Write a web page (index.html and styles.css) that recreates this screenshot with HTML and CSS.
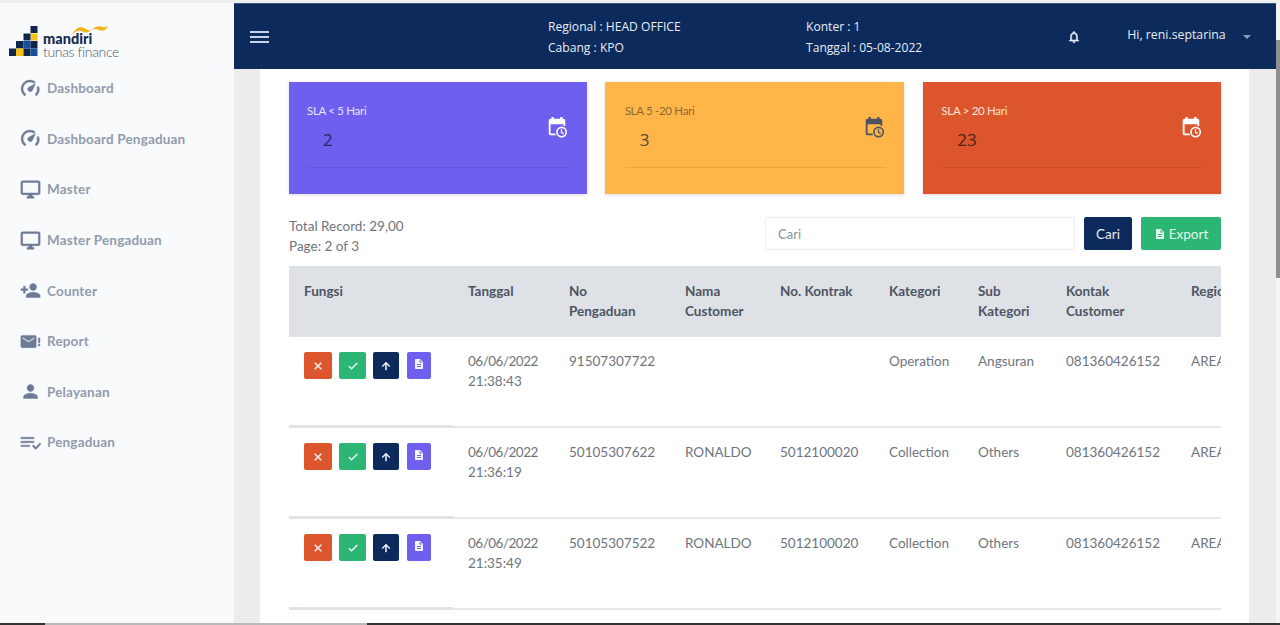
FILE: index.html
```html
<!DOCTYPE html>
<html lang="id">
<head>
    <meta charset="UTF-8">
    <meta name="viewport" content="width=device-width, initial-scale=1.0">
    <title>Mandiri Tunas Finance</title>
    <link rel="stylesheet" href="styles.css">
</head>
<body>

<svg class="icon-defs" aria-hidden="true">
    <symbol id="i-speed" viewBox="0 0 24 24">
        <path d="M5.2 20.500A10 10 0 0 1 17.500 4.400l-1.900 1.500A7.600 7.600 0 0 0 6.900 18.800zM18.800 20.500A10 10 0 0 0 21.200 9.300l-1.900 1.500a7.600 7.600 0 0 1-2 8z"/>
        <path d="M17.800 6.200l-3.700 8a2.800 2.800 0 1 1-4.400-3.400z"/>
    </symbol>
    <symbol id="i-desktop" viewBox="0 0 24 24">
        <path d="M21 2H3c-1.100 0-2 .9-2 2v12c0 1.100.9 2 2 2h7v2H8v2h8v-2h-2v-2h7c1.100 0 2-.9 2-2V4c0-1.100-.9-2-2-2zm0 14H3V4h18v12z"/>
    </symbol>
    <symbol id="i-person-add" viewBox="0 0 24 24">
        <path d="M15 12c2.210 0 4-1.790 4-4s-1.790-4-4-4-4 1.790-4 4 1.790 4 4 4zm-9-2V7H4v3H1v2h3v3h2v-3h3v-2H6zm9 4c-2.670 0-8 1.340-8 4v2h16v-2c0-2.660-5.330-4-8-4z"/>
    </symbol>
    <symbol id="i-mail" viewBox="0 0 24 24">
        <path d="M17 5H2.500C1.700 5 1 5.700 1 6.500v11c0 .8.7 1.500 1.500 1.500H17c.8 0 1.500-.7 1.500-1.500v-11C18.500 5.700 17.800 5 17 5zm-.3 3.500L9.800 13 2.800 8.500V6.800l7 4.500 6.900-4.500z"/>
        <path d="M21 8h1.800v5.500H21zM21 15h1.800v2H21z"/>
    </symbol>
    <symbol id="i-person" viewBox="0 0 24 24">
        <path d="M12 12c2.210 0 4-1.790 4-4s-1.790-4-4-4-4 1.790-4 4 1.790 4 4 4zm0 2c-2.670 0-8 1.340-8 4v2h16v-2c0-2.660-5.330-4-8-4z"/>
    </symbol>
    <symbol id="i-list-check" viewBox="0 0 24 24">
        <path d="M1 6h15v1.700H1zM1 10.500h15v1.700H1zM1 15h10v1.700H1z"/>
        <path d="M14 16l1.300-1.300 2.700 2.700 4.700-4.900 1.300 1.300-6 6.300z"/>
    </symbol>
    <symbol id="i-calendar" viewBox="0 0 24 24">
        <path d="M6 1h2.500v2h7V1H18v2h1c1.100 0 2 .9 2 2v6.300a7.500 7.500 0 0 0-2-.7V9H5v10h5.100c.2.700.5 1.400.9 2H5c-1.100 0-2-.9-2-2V5c0-1.100.9-2 2-2h1z"/>
        <path fill-rule="evenodd" d="M17 11.500a6 6 0 1 1 0 12 6 6 0 0 1 0-12zm0 1.800a4.200 4.200 0 1 0 0 8.400 4.200 4.200 0 0 0 0-8.400zm-.8 1.200h1.400v2.900l2.100 1.200-.7 1.200-2.800-1.600z"/>
    </symbol>
    <symbol id="i-close" viewBox="0 0 24 24">
        <path d="M19 6.400L17.600 5 12 10.600 6.400 5 5 6.400 10.600 12 5 17.600 6.400 19 12 13.400 17.600 19 19 17.600 13.400 12z"/>
    </symbol>
    <symbol id="i-check" viewBox="0 0 24 24">
        <path d="M9 16.200L4.800 12l-1.400 1.400L9 19 21 7l-1.400-1.400z"/>
    </symbol>
    <symbol id="i-up" viewBox="0 0 24 24">
        <path d="M4 12l1.400 1.400L11 7.800V20h2V7.800l5.600 5.600L20 12l-8-8z"/>
    </symbol>
    <symbol id="i-file" viewBox="0 0 24 24">
        <path d="M14 2H6c-1.100 0-2 .9-2 2v16c0 1.100.9 2 2 2h12c1.100 0 2-.9 2-2V8zm2 16H8v-2h8zm0-4H8v-2h8zm-3-5V3.500L18.500 9z"/>
    </symbol>
</svg>

<div class="app">
    <div class="top-strip"></div>

    <div class="layout">
        <aside class="sidebar">
            <div class="logo">
                <svg class="logo-blocks" viewBox="0 0 29 30" aria-hidden="true">
                    <rect x="21.500" y="0" width="7" height="7" fill="#10264d"/>
                    <rect x="21.500" y="7.500" width="7" height="7" fill="#f5c21b"/>
                    <rect x="14.500" y="7.500" width="7" height="7" fill="#10264d"/>
                    <rect x="7" y="15" width="7.500" height="7.500" fill="#10264d"/>
                    <rect x="14.500" y="15" width="7" height="7.500" fill="#16509c"/>
                    <rect x="21.500" y="15" width="7" height="7.500" fill="#10264d"/>
                    <rect x="0" y="22.500" width="7" height="7.500" fill="#10264d"/>
                    <rect x="7" y="22.500" width="7.500" height="7.500" fill="#f5c21b"/>
                    <rect x="14.500" y="22.500" width="7" height="7.500" fill="#10264d"/>
                    <rect x="21.500" y="22.500" width="7" height="7.500" fill="#16509c"/>
                </svg>
                <div class="logo-text">
                    <svg class="logo-wave" viewBox="0 0 36 10" aria-hidden="true">
                        <path d="M0 9C5 2 9 0 14 4c3 2 5 2 8-1 3-2 6-2 9-1 2 .5 3 0 5-1-2 4-5 6-9 4-4-2-6-1-9 1-4 3-6 1-9 0-3-1-5 0-9 3z" fill="#f5b31b"/>
                    </svg>
                    <span class="logo-name">mandiri</span>
                    <span class="logo-sub">tunas finance</span>
                </div>
            </div>

            <nav class="nav">
                <a class="nav-item"><svg class="nav-icon"><use href="#i-speed"/></svg>Dashboard</a>
                <a class="nav-item"><svg class="nav-icon"><use href="#i-speed"/></svg>Dashboard Pengaduan</a>
                <a class="nav-item"><svg class="nav-icon"><use href="#i-desktop"/></svg>Master</a>
                <a class="nav-item"><svg class="nav-icon"><use href="#i-desktop"/></svg>Master Pengaduan</a>
                <a class="nav-item"><svg class="nav-icon"><use href="#i-person-add"/></svg>Counter</a>
                <a class="nav-item"><svg class="nav-icon"><use href="#i-mail"/></svg>Report</a>
                <a class="nav-item"><svg class="nav-icon"><use href="#i-person"/></svg>Pelayanan</a>
                <a class="nav-item"><svg class="nav-icon"><use href="#i-list-check"/></svg>Pengaduan</a>
            </nav>
        </aside>

        <div class="main">
            <header class="topbar">
                <svg class="menu-btn" viewBox="0 0 19 12" aria-hidden="true">
                    <path d="M0 0h19v2H0zM0 5h19v2H0zM0 10h19v2H0z"/>
                </svg>
                <div class="info info-regional">
                    <div>Regional : HEAD OFFICE</div>
                    <div>Cabang : KPO</div>
                </div>
                <div class="info info-konter">
                    <div>Konter : 1</div>
                    <div>Tanggal : 05-08-2022</div>
                </div>
                <svg class="bell" viewBox="0 0 24 24" aria-hidden="true">
                    <path d="M12 22c1.100 0 2-.9 2-2h-4c0 1.100.9 2 2 2zm6-6v-5c0-3.070-1.630-5.640-4.500-6.320V4c0-.83-.67-1.500-1.500-1.500s-1.500.67-1.500 1.500v.68C7.640 5.360 6 7.920 6 11v5l-2 2v1h16v-1l-2-2zm-2 1H8v-6c0-2.480 1.510-4.500 4-4.500s4 2.020 4 4.500v6z"/>
                </svg>
                <div class="user">Hi, reni.septarina</div>
                <span class="caret"></span>
            </header>

            <div class="content">
                <main class="panel">
                    <section class="cards">
                        <div class="card card-purple">
                            <div class="card-body">
                                <div>
                                    <div class="card-title">SLA &lt; 5 Hari</div>
                                    <div class="card-value">2</div>
                                </div>
                                <svg class="card-icon"><use href="#i-calendar"/></svg>
                            </div>
                        </div>
                        <div class="card card-orange">
                            <div class="card-body">
                                <div>
                                    <div class="card-title">SLA 5 -20 Hari</div>
                                    <div class="card-value">3</div>
                                </div>
                                <svg class="card-icon"><use href="#i-calendar"/></svg>
                            </div>
                        </div>
                        <div class="card card-red">
                            <div class="card-body">
                                <div>
                                    <div class="card-title">SLA &gt; 20 Hari</div>
                                    <div class="card-value">23</div>
                                </div>
                                <svg class="card-icon"><use href="#i-calendar"/></svg>
                            </div>
                        </div>
                    </section>

                    <section class="toolbar">
                        <div class="records">
                            <div>Total Record: 29,00</div>
                            <div>Page: 2 of 3</div>
                        </div>
                        <input class="search" type="text" placeholder="Cari">
                        <button class="btn btn-navy">Cari</button>
                        <button class="btn btn-green"><svg class="btn-icon"><use href="#i-file"/></svg>Export</button>
                    </section>

                    <div class="table-wrap">
                        <table class="data-table">
                            <colgroup>
                                <col class="col-fungsi">
                                <col class="col-tanggal">
                                <col class="col-no">
                                <col class="col-nama">
                                <col class="col-kontrak">
                                <col class="col-kategori">
                                <col class="col-sub">
                                <col class="col-kontak">
                                <col class="col-regional">
                            </colgroup>
                            <thead>
                                <tr>
                                    <th>Fungsi</th>
                                    <th>Tanggal</th>
                                    <th>No<br>Pengaduan</th>
                                    <th>Nama<br>Customer</th>
                                    <th>No. Kontrak</th>
                                    <th>Kategori</th>
                                    <th>Sub<br>Kategori</th>
                                    <th>Kontak<br>Customer</th>
                                    <th>Regional</th>
                                </tr>
                            </thead>
                            <tbody>
                                <tr>
                                    <td>
                                        <div class="actions">
                                            <a class="act act-red"><svg><use href="#i-close"/></svg></a>
                                            <a class="act act-green"><svg><use href="#i-check"/></svg></a>
                                            <a class="act act-navy"><svg><use href="#i-up"/></svg></a>
                                            <a class="act act-purple"><svg><use href="#i-file"/></svg></a>
                                        </div>
                                    </td>
                                    <td><span class="date">06/06/2022</span><br>21:38:43</td>
                                    <td>91507307722</td>
                                    <td></td>
                                    <td></td>
                                    <td>Operation</td>
                                    <td>Angsuran</td>
                                    <td>081360426152</td>
                                    <td>AREA</td>
                                </tr>
                                <tr>
                                    <td>
                                        <div class="actions">
                                            <a class="act act-red"><svg><use href="#i-close"/></svg></a>
                                            <a class="act act-green"><svg><use href="#i-check"/></svg></a>
                                            <a class="act act-navy"><svg><use href="#i-up"/></svg></a>
                                            <a class="act act-purple"><svg><use href="#i-file"/></svg></a>
                                        </div>
                                    </td>
                                    <td><span class="date">06/06/2022</span><br>21:36:19</td>
                                    <td>50105307622</td>
                                    <td>RONALDO</td>
                                    <td>5012100020</td>
                                    <td>Collection</td>
                                    <td>Others</td>
                                    <td>081360426152</td>
                                    <td>AREA</td>
                                </tr>
                                <tr>
                                    <td>
                                        <div class="actions">
                                            <a class="act act-red"><svg><use href="#i-close"/></svg></a>
                                            <a class="act act-green"><svg><use href="#i-check"/></svg></a>
                                            <a class="act act-navy"><svg><use href="#i-up"/></svg></a>
                                            <a class="act act-purple"><svg><use href="#i-file"/></svg></a>
                                        </div>
                                    </td>
                                    <td><span class="date">06/06/2022</span><br>21:35:49</td>
                                    <td>50105307522</td>
                                    <td>RONALDO</td>
                                    <td>5012100020</td>
                                    <td>Collection</td>
                                    <td>Others</td>
                                    <td>081360426152</td>
                                    <td>AREA</td>
                                </tr>
                            </tbody>
                        </table>
                    </div>
                </main>
            </div>
        </div>

        <div class="scrollbar"><div class="scroll-thumb"></div></div>
    </div>

    <div class="bottom-strip"></div>
</div>

</body>
</html>
```

FILE: styles.css
```css
* {
    margin: 0;
    padding: 0;
    box-sizing: border-box;
}

body {
    font-family: "Lato", "Noto Sans", sans-serif;
    color: #6e7580;
    background-color: #ececec;
    overflow: hidden;
}

.icon-defs {
    display: none;
}

.app {
    display: flex;
    flex-direction: column;
    height: 100vh;
    overflow: hidden;
}

.top-strip {
    height: 3px;
    flex: none;
    background-color: #eeeff1;
}

.bottom-strip {
    height: 2px;
    flex: none;
    background: linear-gradient(to right, #333 45px, #b9b9b9 45px, #b9b9b9 367px, #333 367px);
}

.layout {
    display: flex;
    flex: 1;
    min-height: 0;
}

/* sidebar */
.sidebar {
    width: 234px;
    flex: none;
    background-color: #f9fafc;
}

.logo {
    display: flex;
    align-items: flex-start;
    gap: 5px;
    height: 54px;
    padding: 23px 0 0 9px;
}

.logo-blocks {
    width: 29px;
    height: 30px;
    flex: none;
}

.logo-text {
    display: flex;
    flex-direction: column;
    position: relative;
    margin-top: 7px;
}

.logo-wave {
    position: absolute;
    top: -8px;
    left: 29px;
    width: 36px;
    height: 10px;
}

.logo-name {
    font-size: 14.500px;
    font-weight: 900;
    color: #16284f;
    line-height: 12px;
}

.logo-sub {
    font-size: 14px;
    font-weight: 300;
    color: #4c5a72;
    line-height: 13px;
    letter-spacing: -0.35px;
}

.nav {
    padding-top: 6px;
}

.nav-item {
    display: flex;
    align-items: center;
    height: 50.6px;
    padding-left: 20px;
    font-size: 13.500px;
    font-weight: 700;
    letter-spacing: 0.17px;
    color: #929bad;
}

.nav-icon {
    width: 21px;
    height: 21px;
    margin-right: 6px;
    flex: none;
    fill: #6c7a96;
    stroke: #6c7a96;
    stroke-width: 0.5;
}

/* main */
.main {
    flex: 1;
    min-width: 0;
    display: flex;
    flex-direction: column;
}

.topbar {
    display: flex;
    align-items: center;
    flex: none;
    height: 66px;
    background-color: #0c2a5b;
    color: #e8edf5;
    border-top: 1px solid #3a5687;
}

.menu-btn {
    width: 19px;
    height: 12px;
    margin-left: 16px;
    flex: none;
    fill: #c7d3e8;
}

.info {
    font-family: "Open Sans", "Noto Sans", sans-serif;
    font-size: 12.100px;
    line-height: 21px;
}

.info-regional {
    width: 258px;
    margin-left: 279px;
}

.bell {
    width: 14px;
    height: 14px;
    margin-left: 145px;
    flex: none;
    fill: #e8edf5;
    stroke: #e8edf5;
    stroke-width: 1;
}

.user {
    font-family: "Open Sans", "Noto Sans", sans-serif;
    font-size: 12.300px;
    margin-left: 46px;
    padding-bottom: 4px;
}

.caret {
    width: 0;
    height: 0;
    margin-left: 17px;
    border-left: 4px solid transparent;
    border-right: 4px solid transparent;
    border-top: 4px solid #8d9cb8;
}

.content {
    flex: 1;
    min-height: 0;
    padding: 0 27px 0 26px;
    background-color: #ececec;
}

.panel {
    height: 100%;
    padding: 13px 28px 0 29px;
    background-color: #fff;
}

/* cards */
.cards {
    display: flex;
    gap: 18px;
}

.card {
    flex: 1;
    height: 112px;
    padding: 20px 18px 0;
    box-shadow: 0 1px 3px rgba(0, 0, 0, 0.15);
}

.card-purple {
    background-color: #6f5fee;
    color: #e6e3fc;
}

.card-orange {
    padding-left: 20px;
    background-color: #ffb547;
    color: #8a6a32;
}

.card-red {
    margin-left: 1px;
    background-color: #dc552c;
    color: #fbe5dc;
}

.card-body {
    display: flex;
    justify-content: space-between;
    height: 66px;
    border-bottom: 1px solid rgba(0, 0, 0, 0.08);
}

.card-title {
    font-size: 11.500px;
    line-height: 18px;
    letter-spacing: -0.3px;
}

.card-value {
    margin: 9px 0 0 16px;
    font-family: "Open Sans", sans-serif;
    font-size: 17px;
    line-height: 22px;
    color: #2a2560;
}

.card-orange .card-value {
    margin-left: 15px;
    color: #4e4a45;
}

.card-red .card-value {
    color: #4a2417;
}

.card-icon {
    width: 22px;
    height: 22px;
    margin: 14px 1px 0 0;
    fill: #fff;
}

.card-orange .card-icon {
    fill: #4f5360;
}

/* search row */
.toolbar {
    display: flex;
    align-items: flex-start;
    margin-top: 23px;
    height: 49px;
}

.records {
    flex: 1;
    margin-top: -1px;
    font-size: 13.500px;
    line-height: 20px;
}

.search {
    width: 310px;
    height: 33px;
    padding: 0 12px;
    font-family: inherit;
    font-size: 13px;
    color: #6e7580;
    border: 1px solid #eceef1;
    border-radius: 2px;
    outline: none;
}

.search::placeholder {
    color: #8a919c;
}

.btn {
    display: flex;
    align-items: center;
    justify-content: center;
    height: 33px;
    margin-left: 9px;
    font-family: inherit;
    font-size: 13.500px;
    color: #e6ecf5;
    border: none;
    border-radius: 2px;
}

.btn-navy {
    width: 48px;
    background-color: #0c2a5b;
}

.btn-green {
    width: 80px;
    background-color: #2bb673;
    color: #e4f7ee;
}

.btn-icon {
    width: 12px;
    height: 12px;
    margin-right: 3px;
    fill: #e4f7ee;
}

/* table */
.table-wrap {
    overflow: hidden;
}

.data-table {
    width: 1100px;
    table-layout: fixed;
    border-collapse: separate;
    border-spacing: 0;
    font-size: 13.500px;
    line-height: 20px;
}

.col-fungsi { width: 164px; }
.col-tanggal { width: 101px; }
.col-no { width: 116px; }
.col-nama { width: 95px; }
.col-kontrak { width: 109px; }
.col-kategori { width: 89px; }
.col-sub { width: 88px; }
.col-kontak { width: 125px; }
.col-regional { width: 213px; }

.data-table th {
    height: 71px;
    padding: 15px;
    text-align: left;
    vertical-align: top;
    font-weight: 700;
    color: #4d5563;
    background-color: #dee1e6;
}

.data-table td {
    height: 91px;
    padding: 14px 15px 15px;
    vertical-align: top;
    border-bottom: 2px solid #e6e8eb;
}

.data-table td:first-child {
    border-bottom: 3px solid #dfe2e6;
}

.date {
    letter-spacing: -0.5px;
}

.actions {
    display: flex;
    gap: 7px;
    margin-top: 1px;
}

.act {
    display: flex;
    align-items: center;
    justify-content: center;
    width: 27px;
    height: 27px;
    border-radius: 2px;
}

.act svg {
    width: 12px;
    height: 12px;
    fill: #f4f6fa;
    stroke: #f4f6fa;
    stroke-width: 1;
}

.act-red {
    width: 28px;
    background-color: #dc552c;
}

.act-green {
    background-color: #2bb673;
}

.act-navy {
    width: 26px;
    background-color: #0c2a5b;
}

.act-purple {
    width: 24px;
    margin-left: 1px;
    background-color: #6f5fee;
}

.act-purple svg {
    margin-bottom: 4px;
    stroke: none;
}

/* window scrollbar */
.scrollbar {
    width: 4px;
    flex: none;
    background-color: #f4f4f4;
}

.scroll-thumb {
    height: 238px;
    margin-top: 37px;
    background-color: #8f8f8f;
}
```
